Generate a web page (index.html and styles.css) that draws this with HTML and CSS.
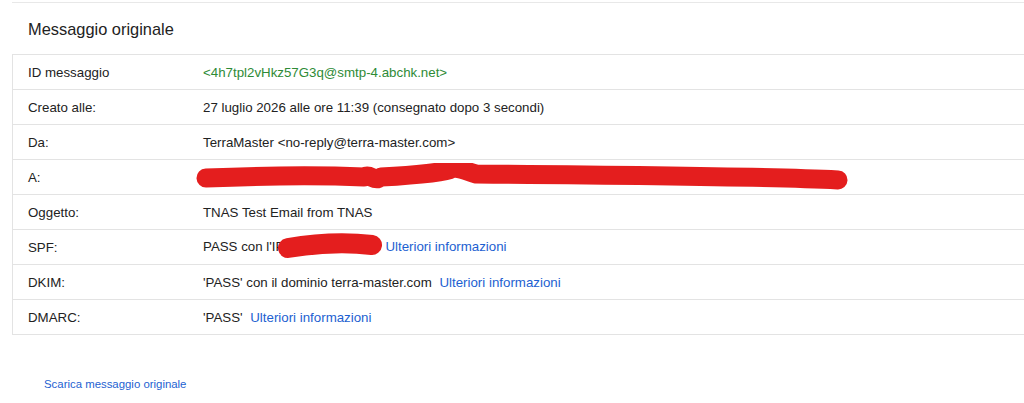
FILE: index.html
```html
<!DOCTYPE html>
<html lang="it">
<head>
  <meta charset="UTF-8">
  <meta name="viewport" content="width=device-width, initial-scale=1.0">
  <title>Messaggio originale</title>
  <link rel="stylesheet" href="styles.css">
</head>
<body>
  <div class="pagina">
    <h1 class="titolo">Messaggio originale</h1>

    <table class="dettagli">
      <tr>
        <td class="etichetta">ID messaggio</td>
        <td class="valore id-msg">&lt;4h7tpl2vHkz57G3q@smtp-4.abchk.net&gt;</td>
      </tr>
      <tr>
        <td class="etichetta">Creato alle:</td>
        <td class="valore">27 luglio 2026 alle ore 11:39 (consegnato dopo 3 secondi)</td>
      </tr>
      <tr>
        <td class="etichetta">Da:</td>
        <td class="valore">TerraMaster &lt;no-reply@terra-master.com&gt;</td>
      </tr>
      <tr>
        <td class="etichetta">A:</td>
        <td class="valore coperto">
          <!-- indirizzo del destinatario cancellato a mano -->
          <svg class="scarabocchio lungo" width="660" height="30" viewBox="0 0 660 30">
            <path d="M10 15 C 60 13, 120 12, 168 14 C 175 10, 178 20, 185 14 C 220 12, 250 9, 255 6 C 262 3, 268 8, 280 11 C 420 12, 560 13, 642 17"
                  fill="none" stroke="#e41e1e" stroke-width="19" stroke-linecap="round" stroke-linejoin="round"/>
          </svg>
        </td>
      </tr>
      <tr>
        <td class="etichetta">Oggetto:</td>
        <td class="valore">TNAS Test Email from TNAS</td>
      </tr>
      <tr>
        <td class="etichetta">SPF:</td>
        <td class="valore">PASS con l'IP<span class="nascosto"><svg class="scarabocchio" width="112" height="30" viewBox="0 0 112 30">
            <path d="M10 15 C 40 10, 68 9, 94 12"
                  fill="none" stroke="#e41e1e" stroke-width="20" stroke-linecap="round"/>
          </svg></span><a href="#" class="link">Ulteriori informazioni</a></td>
      </tr>
      <tr>
        <td class="etichetta">DKIM:</td>
        <td class="valore">'PASS' con il dominio terra-master.com <a href="#" class="link">Ulteriori informazioni</a></td>
      </tr>
      <tr>
        <td class="etichetta">DMARC:</td>
        <td class="valore">'PASS' <a href="#" class="link">Ulteriori informazioni</a></td>
      </tr>
    </table>

    <a href="#" class="scarica">Scarica messaggio originale</a>
  </div>
</body>
</html>
```

FILE: styles.css
```css
body {
  margin: 0;
  font-family: 'Liberation Sans', Arial, sans-serif;
  background: #fff;
  color: #222;
  overflow: hidden;
}

.pagina {
  margin-top: 2px;
  margin-left: 12px;
  border-top: 1px solid #e8e8e8;
}

.titolo {
  margin: 0;
  padding: 17px 0 0 16px;
  height: 34px;
  font-size: 16.4px;
  font-weight: normal;
  color: #222;
}

.dettagli {
  width: 1030px;
  border-collapse: collapse;
  border: 1px solid #e3e3e3;
  border-right: none;
  font-size: 13.3px;
}

.dettagli td {
  height: 34px;
  padding: 0;
  border-top: 1px solid #e3e3e3;
  vertical-align: middle;
}

.etichetta {
  width: 175px;
  padding-left: 15px !important;
}

.id-msg {
  color: #2e8b36;
}

.coperto {
  position: relative;
}

/* tratti rossi sopra i dati privati */
.scarabocchio {
  position: absolute;
  display: block;
}

.lungo {
  left: -7px;
  top: 3px;
}

.nascosto {
  position: relative;
  display: inline-block;
  width: 97px;
  height: 14px;
  vertical-align: middle;
}

.nascosto .scarabocchio {
  left: -6px;
  top: -8px;
}

.link {
  color: #1d5fd1;
  text-decoration: none;
}

.dettagli .link {
  margin-left: 4px;
}

.scarica {
  display: inline-block;
  margin: 43px 0 0 32px;
  font-size: 11.4px;
  color: #1d5fd1;
  text-decoration: none;
}
```
